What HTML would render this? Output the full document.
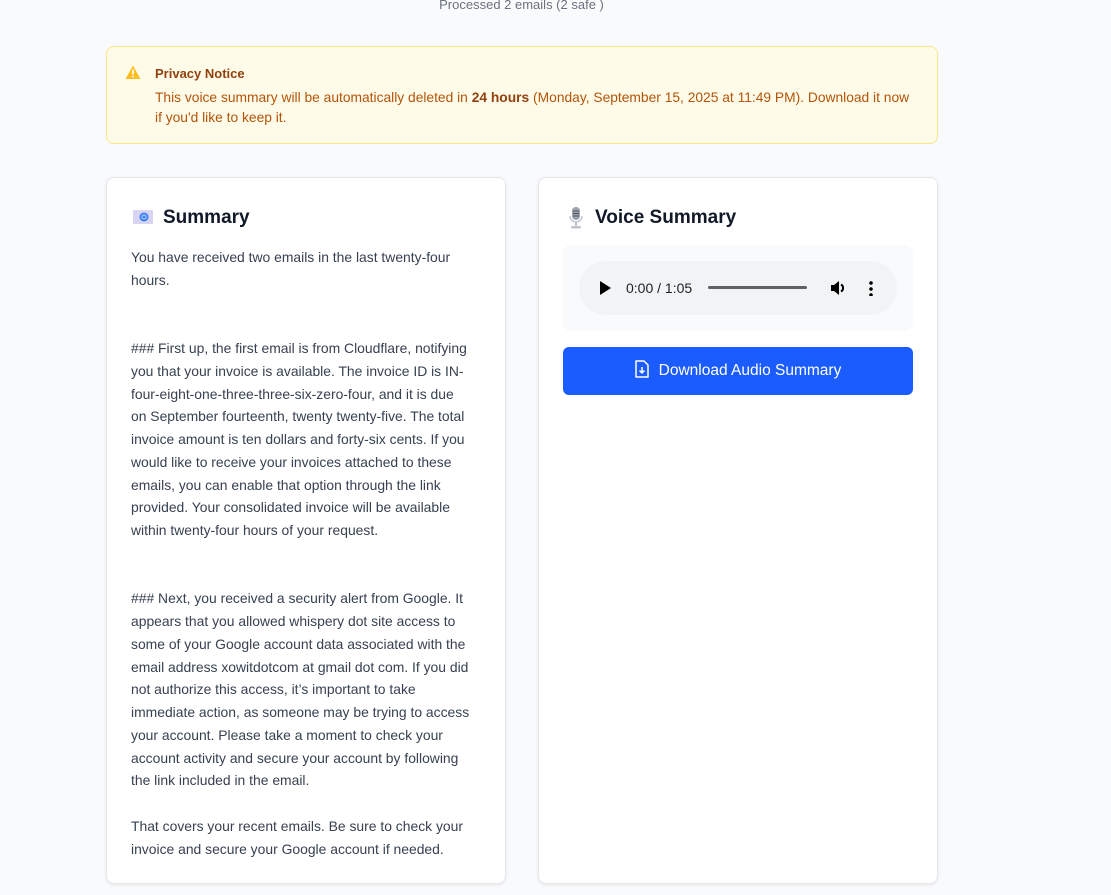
<!DOCTYPE html>
<html><head><meta charset="utf-8">
<style>
*{box-sizing:border-box;margin:0;padding:0}
body{width:1111px;height:895px;overflow:hidden;background:#f9fafb;font-family:"Liberation Sans",sans-serif;position:relative}
.proc{position:absolute;top:-3px;left:0;width:1043px;text-align:center;font-size:13px;color:#6b7280}
.notice{position:absolute;left:106px;top:46px;width:832px;height:98px;background:#fefce8;border:1px solid #fde68a;border-radius:8px}
.notice .t{position:absolute;left:48px;top:19px;font-size:13px;font-weight:bold;color:#92400e}
.notice .b{position:absolute;left:48px;top:41px;font-size:13.8px;line-height:20px;color:#b45309;white-space:nowrap}
.notice svg{position:absolute;left:18px;top:18px}
.card{position:absolute;top:177px;width:400px;height:707px;background:#fff;border:1px solid #e5e7eb;border-radius:8px;box-shadow:0 1px 3px rgba(0,0,0,.08)}
.h{position:absolute;left:56px;top:29px;font-size:19px;font-weight:bold;color:#111827}
.txt{position:absolute;left:24px;top:68px;font-size:13.9px;line-height:22.75px;color:#374151;white-space:nowrap}
.player{position:absolute;left:24px;top:67px;width:350px;height:86px;background:#f9fafb;border-radius:8px}
.pill{position:absolute;left:16px;top:16px;width:318px;height:54px;background:#f1f3f4;border-radius:27px}
.btn{position:absolute;left:24px;top:169px;width:350px;height:48px;background:#1a5cff;border-radius:6px;color:#fff;font-size:15.5px;text-align:center;line-height:48px}
</style></head><body>
<div class="proc">Processed 2 emails (2 safe )</div>
<div class="notice">
<svg width="16" height="15" viewBox="0 0 16 15"><path d="M8 0.5L15.5 14H0.5Z" fill="#fbbf24"/><rect x="7.2" y="4.5" width="1.6" height="5" fill="#fff"/><rect x="7.2" y="10.8" width="1.6" height="1.6" fill="#fff"/></svg>
<div class="t">Privacy Notice</div>
<div class="b">This voice summary will be automatically deleted in <b style="color:#92400e">24 hours</b> (Monday, September 15, 2025 at 11:49 PM). Download it now<br>if you'd like to keep it.</div>
</div>
<div class="card" style="left:106px">
<svg style="position:absolute;left:26px;top:31px" width="20" height="16" viewBox="0 0 20 16"><rect x="0" y="1" width="20" height="14" fill="#d8d4f2"/><circle cx="11" cy="8" r="4.5" fill="#3b82f6"/><circle cx="11" cy="8" r="2" fill="none" stroke="#c7d2fe" stroke-width="1"/></svg>
<div class="h">Summary</div>
<div class="txt">You have received two emails in the last twenty-four<br>hours.<br><br><br>### First up, the first email is from Cloudflare, notifying<br>you that your invoice is available. The invoice ID is IN-<br>four-eight-one-three-three-six-zero-four, and it is due<br>on September fourteenth, twenty twenty-five. The total<br>invoice amount is ten dollars and forty-six cents. If you<br>would like to receive your invoices attached to these<br>emails, you can enable that option through the link<br>provided. Your consolidated invoice will be available<br>within twenty-four hours of your request.<br><br><br>### Next, you received a security alert from Google. It<br>appears that you allowed whispery dot site access to<br>some of your Google account data associated with the<br>email address xowitdotcom at gmail dot com. If you did<br>not authorize this access, it’s important to take<br>immediate action, as someone may be trying to access<br>your account. Please take a moment to check your<br>account activity and secure your account by following<br>the link included in the email.<br><br>That covers your recent emails. Be sure to check your<br>invoice and secure your Google account if needed.</div>
</div>
<div class="card" style="left:538px">
<svg style="position:absolute;left:30px;top:29px" width="14" height="22" viewBox="0 0 14 22"><rect x="3" y="0" width="8" height="13" rx="4" fill="#9ca3af"/><path d="M4 4h6M4 6.5h6M4 9h6" stroke="#4b5563" stroke-width="1"/><path d="M1 9a6 6 0 0 0 12 0" fill="none" stroke="#c4c4cc" stroke-width="1.5"/><rect x="6" y="15" width="2" height="4" fill="#c4c4cc"/><rect x="2" y="19" width="10" height="2.5" rx="1" fill="#c4c4cc"/></svg>
<div class="h">Voice Summary</div>
<div class="player"><div class="pill">
<svg style="position:absolute;left:21px;top:20px" width="11" height="14" viewBox="0 0 11 14"><path d="M0 0L11 7L0 14Z" fill="#000"/></svg>
<div style="position:absolute;left:47px;top:19px;font-size:14px;color:#1f1f1f">0:00 / 1:05</div>
<div style="position:absolute;left:129px;top:25px;width:99px;height:3px;background:#5f5f5f;border-radius:2px"></div>
<svg style="position:absolute;left:251px;top:18px" width="18" height="18" viewBox="0 0 18 18"><path d="M1 6h3l5-4v14l-5-4H1Z" fill="#000"/><path d="M11 5.5a4 4 0 0 1 0 7" fill="none" stroke="#000" stroke-width="2"/></svg>
<div style="position:absolute;left:290px;top:19px;width:4px;height:16px;background:radial-gradient(circle,#000 1.6px,transparent 2px) 0 0/4px 6px repeat-y"></div>
</div></div>
<div class="btn"><svg style="vertical-align:-3px;margin-right:10px" width="14" height="18" viewBox="0 0 14 18"><path d="M1 1h8l4 4v12H1Z" fill="none" stroke="#fff" stroke-width="1.5" stroke-linejoin="round"/><path d="M7 7v6M4.5 10.5L7 13l2.5-2.5" fill="none" stroke="#fff" stroke-width="1.5"/></svg>Download Audio Summary</div>
</div>
</body></html>
